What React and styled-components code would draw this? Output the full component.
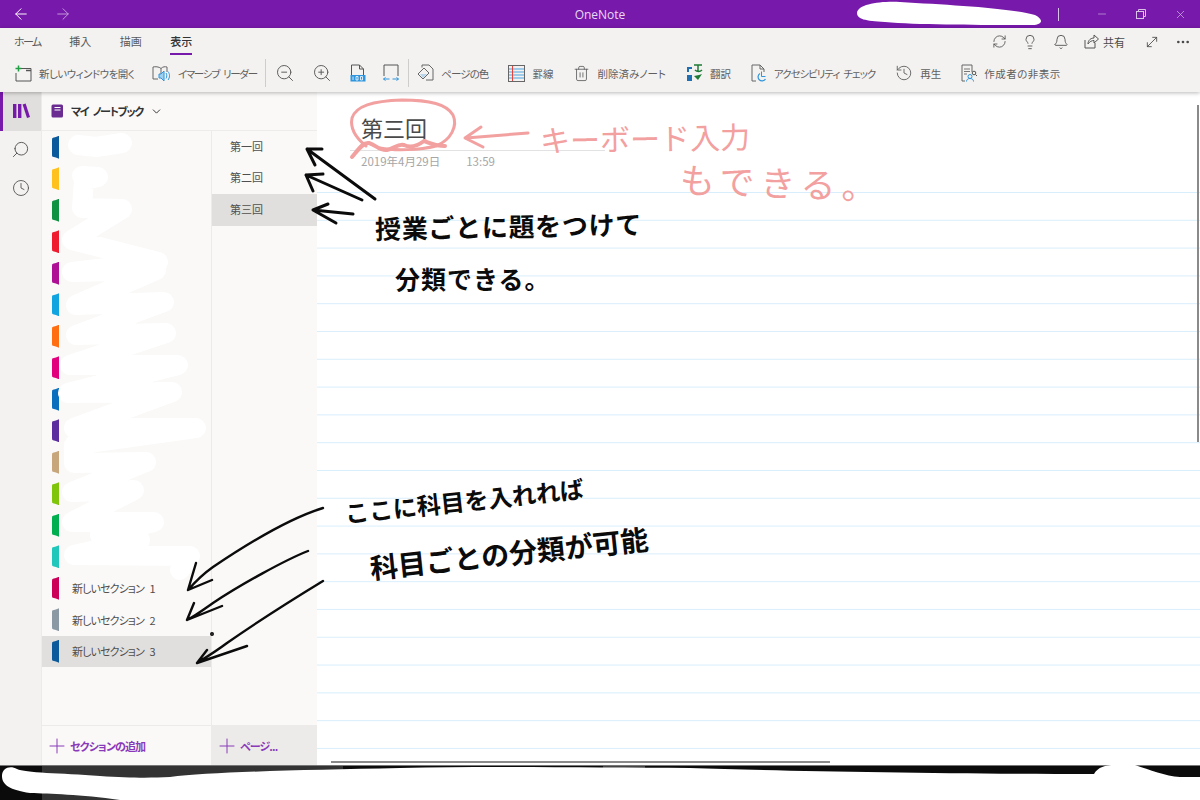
import styled, { createGlobalStyle } from 'styled-components';
import {
  ArrowLeft,
  ArrowRight,
  Bell,
  ChevronDown,
  Clock,
  Ellipsis,
  History,
  Lightbulb,
  Minus,
  MoveDiagonal,
  Plus,
  RefreshCw,
  Search,
  Trash2,
  X,
  ZoomIn,
  ZoomOut,
} from 'lucide-react';

const GlobalStyle = createGlobalStyle`
  html, body {
    margin: 0;
    padding: 0;
    background: #fff;
  }
  body {
    font-family: "Noto Sans CJK JP", "Noto Sans", sans-serif;
    font-feature-settings: "palt";
  }
`;

const Screen = styled.div`
  position: relative;
  width: 1200px;
  height: 800px;
  overflow: hidden;
  display: flex;
  flex-direction: column;
`;

const TitleBar = styled.header`
  height: 28px;
  flex: none;
  background: #7719aa;
  color: #fff;
  display: grid;
  grid-template-columns: 1fr auto 1fr;
  align-items: center;
`;

const NavButtons = styled.div`
  display: flex;
  align-items: center;
  gap: 24px;
  padding-left: 12px;
`;

const AppName = styled.div`
  font-family: "Open Sans", sans-serif;
  font-size: 12px;
  color: #e9d8f2;
`;

const WindowControls = styled.div`
  display: flex;
  align-items: center;
  justify-content: flex-end;
  gap: 28px;
  padding-right: 13px;
  color: #d9c2e6;
`;

const BarDivider = styled.div`
  width: 1px;
  height: 13px;
  background: #d9c2e6;
  margin-right: 9px;
`;

const Ribbon = styled.div`
  flex: none;
  height: 64px;
  background: #f3f2f1;
  box-shadow: 0 1px 4px rgba(0, 0, 0, 0.28);
  position: relative;
  z-index: 2;
  color: #4a4a4a;
`;

const TabRow = styled.nav`
  height: 27px;
  display: flex;
  align-items: center;
  padding: 0 9px 0 14px;
  gap: 28.5px;
`;

const Tab = styled.div`
  position: relative;
  font-size: 11px;
  line-height: 27px;
  letter-spacing: ${(p) => p.$track || 0}px;
  color: ${(p) => (p.$active ? '#333' : '#5a5a5a')};
  font-weight: ${(p) => (p.$active ? 500 : 400)};
  &::after {
    content: '';
    display: ${(p) => (p.$active ? 'block' : 'none')};
    position: absolute;
    left: 0;
    right: 0;
    bottom: 0;
    height: 2px;
    background: #7719aa;
  }
`;

const TabActions = styled.div`
  margin-left: auto;
  display: flex;
  align-items: center;
  gap: 15px;
`;

const ShareButton = styled.div`
  display: flex;
  align-items: center;
  gap: 4px;
  font-size: 11px;
  margin-right: 4px;
`;

const ToolRow = styled.div`
  height: 36px;
  display: flex;
  align-items: center;
  gap: 8.5px;
  padding-left: 14px;
`;

const ToolGroup = styled.div`
  display: flex;
  align-items: center;
  gap: ${(p) => p.$gap}px;
`;

const Tool = styled.div`
  display: flex;
  align-items: center;
  gap: 7px;
  font-size: 10.5px;
  letter-spacing: ${(p) => p.$track || 0}px;
  word-spacing: 3px;
  white-space: nowrap;
  color: #5f5f5f;
`;

const ToolDivider = styled.div`
  width: 1px;
  height: 28px;
  background: #cfcdcb;
`;

const Body = styled.main`
  flex: 1;
  min-height: 0;
  display: flex;
`;

const Rail = styled.aside`
  width: 42px;
  flex: none;
  background: #f3f2f1;
  border-right: 1px solid #eceaea;
  box-sizing: border-box;
  display: flex;
  flex-direction: column;
`;

const RailButton = styled.div`
  height: 38.5px;
  display: flex;
  align-items: center;
  justify-content: center;
  color: #555;
  background: ${(p) => (p.$active ? '#e1dfdd' : 'transparent')};
  border-left: 3px solid ${(p) => (p.$active ? '#7719aa' : 'transparent')};
  border-right: 3px solid transparent;
`;

const Panels = styled.div`
  width: 275px;
  flex: none;
  display: grid;
  grid-template-columns: 170px 105px;
  grid-template-rows: 39px 1fr 40px;
  background: #faf9f8;
`;

const NotebookHeader = styled.div`
  grid-column: 1 / -1;
  display: flex;
  align-items: center;
  gap: 7px;
  padding-left: 9px;
  font-size: 11px;
  font-weight: 700;
  letter-spacing: -1.3px;
  word-spacing: 3px;
  color: #333;
  border-bottom: 1px solid #eeecea;
`;

const SectionList = styled.div`
  display: grid;
  grid-auto-rows: 31.5px;
  align-content: start;
  padding-top: 0.5px;
  border-right: 1px solid #edebe9;
`;

const PageList = styled.div`
  display: grid;
  grid-auto-rows: 31.5px;
  align-content: start;
`;

const Row = styled.div`
  display: flex;
  align-items: center;
  font-size: 11px;
  color: #4f4f4f;
  white-space: nowrap;
  background: ${(p) => (p.$selected ? '#e1dfdd' : 'transparent')};
`;

const SectionRow = styled(Row)`
  padding-left: 10px;
  gap: 13px;
  letter-spacing: -0.9px;
  word-spacing: 4px;
`;

const PageRow = styled(Row)`
  padding: 0 0 2px 18px;
`;

const SectionTab = styled.span`
  width: 7px;
  height: 23px;
  background: ${(p) => p.$color};
  border-radius: 4px 0 0 4px;
  clip-path: polygon(100% 0, 100% 100%, 55% 95%, 0 90%, 0 10%, 55% 5%);
`;

const AddButton = styled.div`
  display: flex;
  align-items: center;
  gap: 1px;
  padding-left: 3px;
  font-size: 11px;
  font-weight: 700;
  letter-spacing: -0.9px;
  color: #8a3ab9;
  white-space: nowrap;
  border-top: 1px solid #edebe9;
  background: ${(p) => (p.$shaded ? '#edebe9' : 'transparent')};
`;

const SectionAdd = styled(AddButton)`
  border-right: 1px solid #edebe9;
`;

const Page = styled.section`
  flex: 1;
  min-width: 0;
  position: relative;
  background: #fff;
  display: flex;
  flex-direction: column;
`;

const PageHeader = styled.div`
  height: 100px;
  flex: none;
  box-sizing: border-box;
  padding: 12px 0 0 33px;
`;

const PageTitle = styled.div`
  width: 244px;
  padding-left: 11px;
  font-size: 22px;
  line-height: 46px;
  color: #4a4a4a;
  border-bottom: 1px solid #e2e2e2;
`;

const PageDate = styled.div`
  display: flex;
  gap: 26px;
  margin-top: 2px;
  padding-left: 11px;
  font-size: 11.5px;
  color: #a6a6a6;
`;

const RuledArea = styled.div`
  flex: 1;
  background-image: linear-gradient(to bottom, #d9eefc 0, #d9eefc 1.2px, transparent 1.2px);
  background-size: 100% 27.8px;
`;

const VerticalScroll = styled.div`
  position: absolute;
  top: 13px;
  right: 1px;
  width: 2px;
  height: 337px;
  background: #8a8a8a;
`;

const HorizontalScroll = styled.div`
  position: absolute;
  left: 14px;
  bottom: 2px;
  width: 499px;
  height: 2px;
  background: #8a8a8a;
`;

const TaskBar = styled.footer`
  height: 35px;
  flex: none;
  display: flex;
  background: #0b0b0b;
  border-top: 1px solid #777;
  box-sizing: border-box;
`;

const TaskSlot = styled.div`
  width: ${(p) => p.$width}px;
  background: ${(p) => p.$color};
`;

const InkLayer = styled.svg`
  position: absolute;
  inset: 0;
  z-index: 3;
  pointer-events: none;
`;

const Ink = styled.div`
  position: absolute;
  z-index: 4;
  left: ${(p) => p.$x}px;
  top: ${(p) => p.$y}px;
  font-size: ${(p) => p.$size}px;
  font-weight: ${(p) => (p.$red ? 400 : 700)};
  font-feature-settings: normal;
  letter-spacing: ${(p) => p.$spacing || 0}px;
  line-height: 1;
  white-space: nowrap;
  color: ${(p) => (p.$red ? '#f3a0a0' : '#0b0b0b')};
  transform: rotate(${(p) => p.$rot || 0}deg);
  transform-origin: left center;
`;

const LibraryIcon = () => (
  <svg width="18" height="18" viewBox="0 0 18 18" fill="#7719aa">
    <rect x="1" y="2" width="3.4" height="14" />
    <rect x="6" y="2" width="3.4" height="14" />
    <path d="M10.6 2.6 13.6 1.6 18 15 15 16Z" />
  </svg>
);

const NotebookIcon = () => (
  <svg width="13" height="14" viewBox="0 0 13 14">
    <rect x="0.5" y="0.5" width="11.5" height="13" rx="1.5" fill="#6b2c91" />
    <path d="M3.5 3.5h6M3.5 6h6" stroke="#fff" strokeWidth="1" />
  </svg>
);

const NewWindowIcon = () => (
  <svg width="18" height="17" viewBox="0 0 18 17" fill="none">
    <path d="M7 3.5h10v12.500H2V8" stroke="#555" />
    <path d="M12 5.500h5" stroke="#555" strokeWidth="1.500" />
    <path d="M4.500 0.500v6M1.500 3.500h6" stroke="#22a045" strokeWidth="1.500" />
  </svg>
);

const ReaderIcon = () => (
  <svg width="19" height="17" viewBox="0 0 19 17" fill="none">
    <path d="M9 3.500C7 1.500 3 1.500 1 2v12h5M9 3.500C11 1.500 13 1.500 15 2v5M9 3.500V9" stroke="#666" />
    <path d="M7 9h2l3-3v10l-3-3H7Z" fill="#9fd0f0" stroke="#2f95dc" />
    <path d="M14 8c1 1.500 1 4 0 5.500M16 6.500c2 2.500 2 6 0 8.500" stroke="#2f95dc" />
  </svg>
);

const ActualSizeIcon = () => (
  <svg width="16" height="18" viewBox="0 0 16 18" fill="none">
    <path d="M1.500 11V1h8l4 4v6M9.500 1v4h4" stroke="#555" />
    <rect x="0.500" y="11" width="15" height="6.500" fill="#2f95dc" />
    <path d="M3 12.500v3.500M6 12.500h2v3.500H6ZM10.500 12.500h2v3.500h-2Z" stroke="#fff" strokeWidth="0.800" />
  </svg>
);

const FitIcon = () => (
  <svg width="16" height="18" viewBox="0 0 16 18" fill="none">
    <path d="M1 12V1h14v11" stroke="#555" />
    <path d="M0.500 15h6M0.500 15l2-1.500M0.500 15l2 1.500M15.500 15h-6M15.500 15l-2-1.500M15.500 15l-2 1.500" stroke="#2f95dc" />
  </svg>
);

const PageColorIcon = () => (
  <svg width="17" height="18" viewBox="0 0 17 18" fill="none">
    <path d="M5 3.500V1h7l4 4v11H9" stroke="#666" />
    <path d="M1 10l6-6 5 5-6 6Z" stroke="#666" />
    <path d="M3 10h7l-4 4Z" fill="#b8d4ea" />
  </svg>
);

const RuleLinesIcon = () => (
  <svg width="17" height="17" viewBox="0 0 17 17" fill="none">
    <rect x="0.500" y="0.500" width="16" height="16" stroke="#666" />
    <path d="M1 4h15M1 7h15M1 10h15M1 13h15" stroke="#4aa3e0" />
    <path d="M4.500 1v15" stroke="#e8403a" />
  </svg>
);

const TranslateIcon = () => (
  <svg width="17" height="18" viewBox="0 0 17 18" fill="none">
    <path d="M1 3h5v2H3v3H1ZM1 11h5v6H1Z" fill="#1f6fb2" />
    <path d="M8 1h8M12 1v6M9 6c2 2 5 2 7 0" stroke="#1f7a35" strokeWidth="1.500" />
    <path d="M8 12l4 4 4-6-3 1Z" fill="#1f7a35" />
  </svg>
);

const AccessibilityIcon = () => (
  <svg width="16" height="18" viewBox="0 0 16 18" fill="none">
    <path d="M5 17H1V1h8l4 4v3M9 1v4h4" stroke="#666" />
    <path d="M9 9.500a4 4 0 1 0 5.500 5.500" stroke="#2f95dc" strokeWidth="1.200" />
    <path d="M10.500 7.500v5h4" stroke="#2f95dc" />
  </svg>
);

const AuthorIcon = () => (
  <svg width="16" height="18" viewBox="0 0 16 18" fill="none">
    <path d="M4 17H1V1h10v7" stroke="#666" />
    <path d="M3 5h6M3 7.500h6M3 10h3" stroke="#777" />
    <circle cx="9" cy="12.500" r="2" stroke="#2f95dc" />
    <path d="M5.500 17.500c0-2 1.500-3 3.500-3s3.500 1 3.500 3" stroke="#2f95dc" />
    <circle cx="13" cy="9" r="1.800" stroke="#555" />
    <path d="M14.500 10.500l1.500 1.500" stroke="#555" />
  </svg>
);

const ShareIcon = () => (
  <svg width="15" height="15" viewBox="0 0 15 15" fill="none" stroke="#555">
    <path d="M1 6v8h10V9" />
    <path d="M4 10c0-4 3-6 6-6V1l4.500 4L10 9V6.500C8 6.500 5.500 7.500 4 10Z" />
  </svg>
);

const RestoreIcon = () => (
  <svg width="10" height="10" viewBox="0 0 10 10" fill="none" stroke="currentColor">
    <rect x="0.500" y="2.500" width="7" height="7" />
    <path d="M2.500 2.500v-2h7v7h-2" />
  </svg>
);

const sections = [
  ['#0b5a9c', ''],
  ['#ffc11e', ''],
  ['#0f9342', ''],
  ['#ee1c2e', ''],
  ['#ae0f95', ''],
  ['#10a5e0', ''],
  ['#ff6f12', ''],
  ['#e2007f', ''],
  ['#0a6fbd', ''],
  ['#5c2d9e', ''],
  ['#c8a67c', ''],
  ['#80c50a', ''],
  ['#00b050', ''],
  ['#20c7ba', ''],
  ['#cc0058', '新しいセクション 1'],
  ['#8a99a3', '新しいセクション 2'],
  ['#0b5a9c', '新しいセクション 3'],
];

const pages = ['第一回', '第二回', '第三回'];

function App() {
  return (
    <Screen>
      <GlobalStyle />
      <TitleBar>
        <NavButtons>
          <ArrowLeft size={18} strokeWidth={1.3} color="#fff" />
          <ArrowRight size={18} strokeWidth={1.3} color="#c49bdb" />
        </NavButtons>
        <AppName>OneNote</AppName>
        <WindowControls>
          <BarDivider />
          <Minus size={12} strokeWidth={1.2} />
          <RestoreIcon />
          <X size={13} strokeWidth={1.2} />
        </WindowControls>
      </TitleBar>

      <Ribbon>
        <TabRow>
          <Tab $track={-1.6}>ホーム</Tab>
          <Tab>挿入</Tab>
          <Tab>描画</Tab>
          <Tab $active>表示</Tab>
          <TabActions>
            <RefreshCw size={15} strokeWidth={1.3} />
            <Lightbulb size={16} strokeWidth={1.3} />
            <Bell size={16} strokeWidth={1.3} />
            <ShareButton>
              <ShareIcon />
              共有
            </ShareButton>
            <MoveDiagonal size={16} strokeWidth={1.3} />
            <Ellipsis size={16} strokeWidth={2} />
          </TabActions>
        </TabRow>
        <ToolRow>
          <ToolGroup $gap={17.5}>
            <Tool $track={-0.55}><NewWindowIcon />新しいウィンドウを開く</Tool>
            <Tool $track={-1.3}><ReaderIcon />イマーシブ リーダー</Tool>
          </ToolGroup>
          <ToolDivider />
          <ToolGroup $gap={17.5}>
            <Tool><ZoomOut size={20} strokeWidth={1.2} /></Tool>
            <Tool><ZoomIn size={20} strokeWidth={1.2} /></Tool>
            <Tool><ActualSizeIcon /></Tool>
            <Tool><FitIcon /></Tool>
          </ToolGroup>
          <ToolDivider />
          <ToolGroup $gap={20}>
            <Tool $track={-0.9}><PageColorIcon />ページの色</Tool>
            <Tool><RuleLinesIcon />罫線</Tool>
            <Tool><Trash2 size={17} strokeWidth={1.2} />削除済みノート</Tool>
            <Tool><TranslateIcon />翻訳</Tool>
            <Tool $track={-1.05}><AccessibilityIcon />アクセシビリティ チェック</Tool>
            <Tool><History size={18} strokeWidth={1.2} />再生</Tool>
            <Tool $track={0.5}><AuthorIcon />作成者の非表示</Tool>
          </ToolGroup>
        </ToolRow>
      </Ribbon>

      <Body>
        <Rail>
          <RailButton $active><LibraryIcon /></RailButton>
          <RailButton><Search size={19} strokeWidth={1.2} style={{ transform: 'scaleX(-1)' }} /></RailButton>
          <RailButton><Clock size={18} strokeWidth={1.2} /></RailButton>
        </Rail>
        <Panels>
          <NotebookHeader>
            <NotebookIcon />
            マイ ノートブック
            <ChevronDown size={13} strokeWidth={1.8} />
          </NotebookHeader>
          <SectionList>
            {sections.map(([color, name], i) => (
              <SectionRow key={i} $selected={i === 16}>
                <SectionTab $color={color} />
                {name}
              </SectionRow>
            ))}
          </SectionList>
          <PageList>
            {pages.map((name, i) => (
              <PageRow key={name} $selected={i === 2}>{name}</PageRow>
            ))}
          </PageList>
          <SectionAdd>
            <Plus size={24} strokeWidth={1} />
            セクションの追加
          </SectionAdd>
          <AddButton $shaded>
            <Plus size={24} strokeWidth={1} />
            ページ...
          </AddButton>
        </Panels>
        <Page>
          <PageHeader>
            <PageTitle>第三回</PageTitle>
            <PageDate>
              <span>2019年4月29日</span>
              <span>13:59</span>
            </PageDate>
          </PageHeader>
          <RuledArea />
          <VerticalScroll />
          <HorizontalScroll />
        </Page>
      </Body>

      <TaskBar>
        <TaskSlot $width={42} $color="#0b0b0b" />
        <TaskSlot $width={301} $color="#333" />
        <TaskSlot $width={260} $color="#0b0b0b" />
        <TaskSlot $width={42} $color="#444" />
      </TaskBar>

      <InkLayer width="1200" height="800" viewBox="0 0 1200 800" fill="none" strokeLinecap="round" strokeLinejoin="round">
        {/* white marker over private names */}
        <g fill="#fff">
          <path d="M857 13C858 4 880 1 900 2C950 5 1010 8 1035 15C1045 20 1042 26 1030 25C980 25 920 25 885 22C865 21 857 19 857 13Z" />
          <path d="M2 776C2 768 10 765 17 769C25 773 60 773 100 776C130 778 150 778 170 777C210 772 300 770 400 768C500 766 600 768 690 768C780 771 950 774 1094 774C1098 767 1105 765 1115 765L1135 765C1150 770 1165 776 1180 777L1200 777V800H120C80 794 50 794 30 793C10 790 2 785 2 776Z" />
        </g>
        <g stroke="#fff" strokeWidth="20">
          <path d="M78 145 96 147 122 143" />
          <path d="M82 176 98 177 84 180 82 208 122 209 72 240 158 262 72 272 156 270 76 305 164 302 76 335 166 333 70 365 178 365 68 393 172 392 74 428 196 428 74 445 74 463 146 462 72 492 134 490 72 522 154 522 100 535 140 540 74 555 190 556 180 570" />
        </g>

        {/* pink circle and arrow */}
        <g stroke="#f2a0a0" strokeWidth="3">
          <path d="M366 146C356 138 350 128 352 118C356 106 372 101 402 100C430 100 447 104 453 115C458 126 451 140 436 146C420 150 395 151 380 148" />
          <path d="M352 157C358 150 363 142 369 143C376 145 380 151 387 150C394 149 398 143 404 145C410 148 416 147 424 141C430 143 436 146 445 146" strokeWidth="4" />
          <path d="M528 133 466 138" />
          <path d="M481 127 465 138 483 147" />
        </g>

        {/* black arrows */}
        <g stroke="#0b0b0b" strokeWidth="3">
          <path d="M375 199 307 149M322 149 307 149 315 165" />
          <path d="M362 200 306 175M323 174 306 175 313 191" />
          <path d="M353 214 313 210M328 204 313 210 336 223" />
        </g>
        <g stroke="#0b0b0b" strokeWidth="2.400">
          <path d="M323 508C290 518 250 542 213 567C203 574 195 582 188 590M196 563 188 590 212 580" />
          <path d="M308 551C285 560 240 585 213 603C203 610 195 616 187 620M194 603 187 620 222 606" />
          <path d="M323 581C300 595 260 620 227 643C215 652 205 658 197 663M207 650 197 663 247 646" />
          <circle cx="212" cy="634" r="0.800" />
        </g>
      </InkLayer>

      <Ink $red $x={540} $y={124} $size={30} $rot={-1}>キーボード入力</Ink>
      <Ink $red $x={680} $y={160} $size={35} $spacing={6} $rot={2}>もできる。</Ink>
      <Ink $x={375} $y={215} $size={26} $spacing={0.7} $rot={-1}>授業ごとに題をつけて</Ink>
      <Ink $x={395} $y={266} $size={25} $spacing={1}>分類できる。</Ink>
      <Ink $x={345} $y={501} $size={24} $rot={-6}>ここに科目を入れれば</Ink>
      <Ink $x={370} $y={553} $size={28} $rot={-6}>科目ごとの分類が可能</Ink>
    </Screen>
  );
}

export default App;
